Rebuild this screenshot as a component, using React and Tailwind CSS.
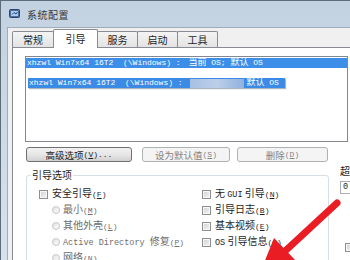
import React from "react";

function Mn({ k, dots }) {
  return (
    <span className="font-['Liberation_Mono',monospace] text-[8px]">
      (<span className="underline">{k}</span>){dots}
    </span>
  );
}

function Box() {
  return (
    <span className="inline-block shrink-0 w-[9px] h-[9px] border border-[#8e8f8f] bg-gradient-to-br from-[#cbd0d6] to-[#f7f7f7] shadow-[inset_0_0_0_1px_#f6f6f6]" />
  );
}

function Radio() {
  return (
    <span className="inline-block shrink-0 w-[8px] h-[8px] rounded-full border border-[#c6c6c6] bg-gradient-to-br from-[#e4e4e4] to-[#fbfbfb]" />
  );
}

function Check({ children }) {
  return (
    <div className="h-4 flex items-center gap-[4px] text-[10px] leading-[12px] text-[#1e1e1e]">
      <Box />
      <span className="whitespace-nowrap">{children}</span>
    </div>
  );
}

function RadioRow({ children }) {
  return (
    <div className="h-4 flex items-center gap-[3px] pl-[13px] text-[10px] leading-[12px] text-[#6d6d6d]">
      <Radio />
      <span className="whitespace-nowrap">{children}</span>
    </div>
  );
}

function Tab({ label, active, w }) {
  if (active) {
    return (
      <div className={`relative z-10 ${w} h-[19px] -ml-px bg-white border border-b-0 border-[#898c95] rounded-t-[2px] flex items-center justify-center text-[10px] text-[#1e1e1e] pb-[2px]`}>
        {label}
      </div>
    );
  }
  return (
    <div className={`${w} h-[17px] -ml-px first:ml-0 border border-b-0 border-[#898c95] rounded-t-[2px] bg-gradient-to-b from-[#f4f4f4] to-[#e2e2e2] flex items-center justify-center text-[10px] text-[#1e1e1e] pb-[1px]`}>
      {label}
    </div>
  );
}

export default function App() {
  return (
    <div className="relative w-[350px] h-[260px] overflow-hidden bg-[#f0f0f0] font-['Noto_Sans_CJK_SC',sans-serif]">
      <div className="w-[420px] h-[300px] flex flex-col border-t border-l border-[#5f6d7b] bg-gradient-to-b from-[#c3d2e1] to-[#d9e4ee]">
        {/* title bar */}
        <div className="h-[26px] shrink-0 flex items-center pl-[8px] gap-[7px]">
          <svg width="11" height="10" viewBox="0 0 11 10">
            <rect x="0.5" y="0.5" width="10" height="8" rx="1" fill="#4d6f9f" stroke="#2c4470" />
            <rect x="2" y="2" width="7" height="5" fill="#a9cdf0" />
            <path d="M3 5.5 L5 3.5 L7 5 L8.5 3" stroke="#2c4470" strokeWidth="1" fill="none" />
          </svg>
          <span className="text-[10px] text-[#3a3a3a] tracking-[0.5px]">系统配置</span>
        </div>

        {/* client area */}
        <div className="flex-1 ml-[6px] bg-[#f0f0f0] border-t border-l border-[#9eacbb] pl-[4px] pt-[1px] flex flex-col">
          <div className="flex items-end h-[19px]">
            <Tab label="常规" w="w-[42px]" />
            <Tab label="引导" w="w-[45px]" active />
            <Tab label="服务" w="w-[41px]" />
            <Tab label="启动" w="w-[41px]" />
            <Tab label="工具" w="w-[41px]" />
          </div>

          <div className="flex-1 -mt-px bg-white border-t border-l border-[#898c95] pt-[8px] pl-[12px]">
            {/* list box */}
            <div className="w-[323px] h-[86px] border border-[#828790] bg-white pt-px font-['Liberation_Mono','Noto_Sans_CJK_SC',monospace] text-[8px] text-white">
              <div className="h-[10px] leading-[10px] bg-[#3c8ee9] pl-[1px] whitespace-pre flex items-center">
                xhzwl Win7x64 16T2  (\Windows) : <span className="text-[9px] ml-[3px]">当前</span> OS; <span className="text-[9px]">默认</span> OS
              </div>
              <div className="mt-[10px] ml-[2px] w-[257px] h-[10px] leading-[10px] bg-[#3a8ae6] pl-[1px] whitespace-pre flex items-center shadow-[1px_1px_1px_rgba(120,130,150,0.6)]">
                xhzwl Win7x64 16T2  (\Windows) :{" "}
                <span className="inline-block w-[54px] h-[9px] ml-[3px] bg-gradient-to-r from-[#a6c0e3] via-[#bccfe9] to-[#90b1dd] blur-[0.5px]" />
                <span className="text-[9px] ml-[2px]">默认</span> OS
              </div>
            </div>

            {/* buttons */}
            <div className="flex mt-[5px] ml-[1px] text-[9.5px] leading-[12px]">
              <div className="w-[106px] h-[15px] rounded-[3px] border border-[#707070] bg-gradient-to-b from-[#f2f2f2] via-[#e6e6e6] to-[#d2d2d2] flex items-center justify-center text-[#1e1e1e]">
                高级选项<Mn k="V" dots="..." />
              </div>
              <div className="ml-[10px] w-[88px] h-[15px] rounded-[3px] border border-[#adb2b5] bg-[#f4f4f4] flex items-center justify-center text-[#838383]">
                设为默认值<Mn k="S" />
              </div>
              <div className="ml-[7px] w-[91px] h-[15px] rounded-[3px] border border-[#adb2b5] bg-[#f4f4f4] flex items-center justify-center text-[#838383]">
                删除<Mn k="D" />
              </div>
            </div>

            {/* options */}
            <div className="flex items-start mt-[3px] ml-[1px]">
              <fieldset className="mt-[4px] w-[303px] h-[110px] shrink-0 border border-[#d5dfe5] rounded-[3px]">
                <legend className="ml-[4px] px-[1px] text-[10px] leading-[12px] text-[#1e1e1e]">引导选项</legend>
                <div className="flex pl-[12px] pt-[5px]">
                  <div className="w-[163px] shrink-0">
                    <Check>安全引导<Mn k="F" /></Check>
                    <RadioRow>最小<Mn k="M" /></RadioRow>
                    <RadioRow>其他外壳<Mn k="L" /></RadioRow>
                    <RadioRow>
                      <span className="font-['Liberation_Mono',monospace] text-[8.5px]">Active Directory </span>修复<Mn k="P" />
                    </RadioRow>
                    <RadioRow>网络<Mn k="N" /></RadioRow>
                  </div>
                  <div>
                    <Check>无 <span className="font-['Liberation_Mono',monospace] text-[8.5px]">GUI</span> 引导<Mn k="N" /></Check>
                    <Check>引导日志<Mn k="B" /></Check>
                    <Check>基本视频<Mn k="E" /></Check>
                    <Check><span className="font-['Liberation_Mono',monospace] text-[8.5px]">OS</span> 引导信息<Mn k="O" /></Check>
                  </div>
                </div>
              </fieldset>

              <div className="ml-[11px] flex flex-col">
                <div className="h-[12px] text-[10px] leading-[12px] text-[#1e1e1e] whitespace-nowrap">超时<Mn k="T" />:</div>
                <div className="mt-[4px] w-[40px] h-[13px] border border-[#abadb3] bg-white pl-[2px] font-['Liberation_Mono',monospace] text-[8.5px] leading-[11px] text-[#1e1e1e]">
                  0
                </div>
                <div className="mt-[39px] ml-[5px]">
                  <Box />
                </div>
              </div>
            </div>
          </div>
        </div>
      </div>

      {/* red annotation arrow */}
      <svg className="absolute inset-0 pointer-events-none" width="350" height="260" viewBox="0 0 350 260">
        <line x1="337" y1="203" x2="283" y2="253" stroke="#ea1d25" strokeWidth="7" strokeLinecap="round" />
        <polygon points="258,278 274,238 298,263" fill="#ea1d25" />
      </svg>
    </div>
  );
}
